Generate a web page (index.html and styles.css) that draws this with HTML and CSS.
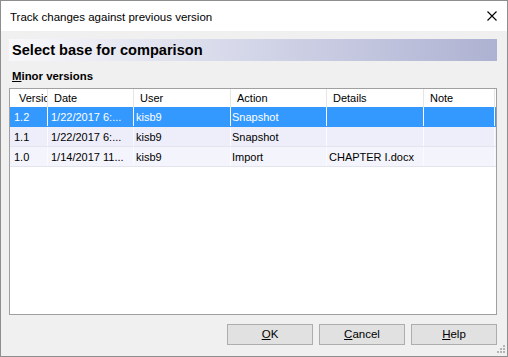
FILE: index.html
```html
<!DOCTYPE html>
<html>
<head>
<meta charset="utf-8">
<link rel="stylesheet" href="styles.css">
</head>
<body>
<div class="window">
  <div class="titlebar">
    <span class="title">Track changes against previous version</span>
    <svg class="close" width="10" height="10" viewBox="0 0 10 10"><path d="M0.5 0.5 L9.5 9.5 M9.5 0.5 L0.5 9.5" stroke="#000" stroke-width="1.1" fill="none"/></svg>
  </div>
  <div class="content">
    <div class="banner">Select base for comparison</div>
    <div class="label"><span class="ul">M</span>inor versions</div>
    <div class="list">
      <div class="row head">
        <div class="cell c1">Version</div>
        <div class="cell">Date</div>
        <div class="cell">User</div>
        <div class="cell">Action</div>
        <div class="cell">Details</div>
        <div class="cell">Note</div>
      </div>
      <div class="row sel">
        <div class="cell c1">1.2</div>
        <div class="cell c2">1/22/2017 6:...</div>
        <div class="cell">kisb9</div>
        <div class="cell c4">Snapshot</div>
        <div class="cell"></div>
        <div class="cell"></div>
      </div>
      <div class="row alt1">
        <div class="cell c1">1.1</div>
        <div class="cell c2">1/22/2017 6:...</div>
        <div class="cell">kisb9</div>
        <div class="cell c4">Snapshot</div>
        <div class="cell"></div>
        <div class="cell"></div>
      </div>
      <div class="row alt2">
        <div class="cell c1">1.0</div>
        <div class="cell c2">1/14/2017 11...</div>
        <div class="cell">kisb9</div>
        <div class="cell c4">Import</div>
        <div class="cell">CHAPTER I.docx</div>
        <div class="cell"></div>
      </div>
    </div>
    <div class="buttons">
      <button class="btn"><span class="ul">O</span>K</button>
      <button class="btn"><span class="ul">C</span>ancel</button>
      <button class="btn"><span class="ul">H</span>elp</button>
    </div>
  </div>
  <svg class="grip" width="10" height="10" viewBox="0 0 10 10">
    <rect x="7" y="0" width="2" height="2" fill="#b4b4b4"/>
    <rect x="4" y="3" width="2" height="2" fill="#b4b4b4"/>
    <rect x="7" y="3" width="2" height="2" fill="#b4b4b4"/>
    <rect x="1" y="6" width="2" height="2" fill="#b4b4b4"/>
    <rect x="4" y="6" width="2" height="2" fill="#b4b4b4"/>
    <rect x="7" y="6" width="2" height="2" fill="#b4b4b4"/>
  </svg>
</div>
</body>
</html>
```
FILE: styles.css
```css
* { box-sizing: border-box; }
html, body { margin: 0; padding: 0; background: #f0f0f0; }
body { font-family: "Liberation Sans", Arial, sans-serif; color: #000; }

.window {
  position: relative;
  width: 508px;
  height: 357px;
  border: 1px solid #8e8e8e;
  background: #f0f0f0;
  display: flex;
  flex-direction: column;
}

.titlebar {
  height: 30px;
  background: #fff;
  display: flex;
  align-items: center;
  justify-content: space-between;
  padding: 0 10px 0 9px;
  flex: none;
}
.title { font-size: 11.5px; line-height: 14px; padding-top: 1px; }
.close { display: block; margin-top: 0; }

.content {
  padding: 8px 10px 0 8px;
  display: flex;
  flex-direction: column;
}

.banner {
  height: 22px;
  background: linear-gradient(to right, #f8f8fb 0%, #d3d6e8 50%, #aeb2d2 100%);
  font-weight: bold;
  font-size: 14.6px;
  line-height: 22px;
  padding-left: 3px;
}

.label {
  margin-top: 9px;
  font-weight: bold;
  font-size: 11.4px;
  line-height: 13px;
  padding-left: 3px;
  height: 13px;
}
.ul { text-decoration: underline; text-underline-offset: 1px; }

.list {
  margin-top: 5px;
  height: 227px;
  background: #fff;
  border: 1px solid #a0a0a0;
  font-size: 11px;
}

.row {
  display: grid;
  grid-template-columns: 38px 86px 97px 96px 97px 71px;
  height: 20px;
  border-bottom: 1px solid #e4e4ef;
}
.cell {
  white-space: nowrap;
  overflow: hidden;
  line-height: 19px;
  padding-left: 2px;
  border-right: 1px solid #fbfbff;
}
.row.head {
  height: 18px;
  border-bottom: none;
}
.row.head .cell {
  line-height: 18px;
  padding-left: 6px;
  padding-top: 0;
  border-right: 1px solid #e5e5e5;
}
.row.head .c1 { padding-left: 9px; text-overflow: clip; }

.row .c1 { padding-left: 4px; }
.row .c2 { padding-left: 3px; }
.row .c4 { padding-left: 1px; }
.row:not(.head) .cell { padding-top: 1px; }

.row.sel { background: #3399ff; color: #fff; border-bottom-color: #3399ff; }
.row.sel .cell { border-right-color: #fff; }
.row.alt1 { background: #eeeefa; }
.row.alt2 { background: #f4f4fc; }

.buttons {
  margin-top: 9px;
  display: flex;
  justify-content: flex-end;
  gap: 6px;
}
.btn {
  width: 86px;
  height: 21px;
  background: #e1e1e1;
  border: 1px solid #adadad;
  font-family: "Liberation Sans", Arial, sans-serif;
  font-size: 11.5px;
  color: #000;
  padding: 0;
  line-height: 19px;
}

.grip {
  position: absolute;
  right: 1px;
  bottom: 1px;
}
```
